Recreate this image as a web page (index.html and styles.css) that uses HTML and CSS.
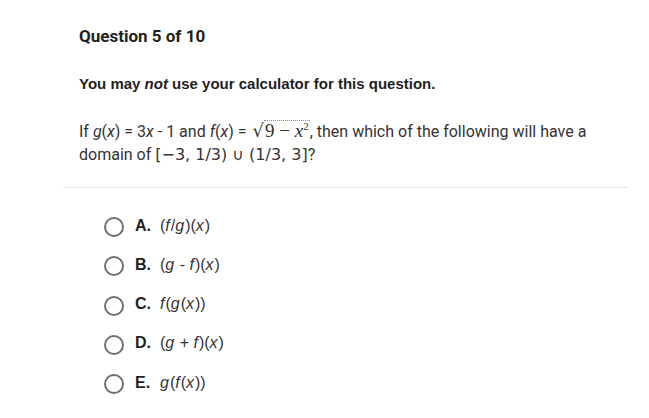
FILE: index.html
```html
<!DOCTYPE html>
<html>
<head>
<meta charset="utf-8">
<link rel="stylesheet" href="styles.css">
</head>
<body>
<div class="page">
  <h1 class="title">Question 5 of 10</h1>
  <p class="note">You may <em>not</em> use your calculator for this question.</p>
  <p class="stem">If <i>g</i>(<i>x</i>) = 3<i>x</i> - 1 and <i>f</i>(<i>x</i>) = <span class="sqrt"><span class="rad">√</span><span class="under">9 − <span class="serif-x">x</span><sup>2</sup></span></span>, then which of the following will have a domain of <span class="interval">[−3, 1/3) ∪ (1/3, 3]</span>?</p>
  <hr class="divider">
  <ul class="options">
    <li class="option"><span class="radio"></span><span class="letter">A.</span><span class="expr">(<i>f</i>/<i>g</i>)(<i>x</i>)</span></li>
    <li class="option"><span class="radio"></span><span class="letter">B.</span><span class="expr">(<i>g</i> - <i>f</i>)(<i>x</i>)</span></li>
    <li class="option"><span class="radio"></span><span class="letter">C.</span><span class="expr"><i>f</i>(<i>g</i>(<i>x</i>))</span></li>
    <li class="option"><span class="radio"></span><span class="letter">D.</span><span class="expr">(<i>g</i> + <i>f</i>)(<i>x</i>)</span></li>
    <li class="option"><span class="radio"></span><span class="letter">E.</span><span class="expr"><i>g</i>(<i>f</i>(<i>x</i>))</span></li>
  </ul>
</div>
</body>
</html>
```

FILE: styles.css
```css
html, body {
  margin: 0;
  padding: 0;
  background: #ffffff;
}
body {
  font-family: Roboto, "Liberation Sans", sans-serif;
  color: #333333;
}
.page {
  padding: 26px 21px 0 79px;
}
.title {
  margin: 0;
  font-size: 17px;
  font-weight: 700;
  color: #1f1f23;
  line-height: 20px;
}
.note {
  margin: 28px 0 0;
  font-family: "Liberation Sans", Arial, sans-serif;
  font-size: 15px;
  font-weight: 700;
  color: #1f1f23;
  line-height: 20px;
}
.note em {
  font-style: italic;
}
.stem {
  margin: 26px 0 0;
  font-size: 16px;
  line-height: 23px;
  color: #333333;
  max-width: 530px;
}
.stem i {
  font-style: italic;
}
.sqrt {
  display: inline-flex;
  align-items: flex-end;
  margin-left: 2px;
}
.rad {
  font-family: "DejaVu Serif", serif;
  font-size: 18px;
  line-height: 19px;
}
.under {
  border-top: 1px dotted #888;
  font-family: "Liberation Serif", serif;
  font-size: 19px;
  line-height: 19px;
  padding: 0 1px;
}
.serif-x {
  font-style: italic;
}
.under sup {
  font-size: 11px;
  line-height: 0;
}
.interval {
  font-family: "DejaVu Sans", sans-serif;
  font-size: 16px;
}
.divider {
  margin: 21px 0 0 -16px;
  border: 0;
  border-top: 1px solid #e2e2e2;
}
.options {
  list-style: none;
  margin: 18px 0 0;
  padding: 0 0 0 25px;
}
.option {
  display: flex;
  align-items: center;
  height: 39.25px;
  font-size: 15px;
}
.radio {
  width: 16px;
  height: 16px;
  border: 2px solid #6f6f6f;
  border-radius: 50%;
  box-sizing: content-box;
  flex: none;
  margin-top: 3px;
}
.letter {
  font-family: "Liberation Sans", Arial, sans-serif;
  font-size: 16px;
  font-weight: 700;
  color: #1f1f23;
  margin-left: 11px;
  width: 25px;
}
.expr {
  font-family: "Liberation Sans", Arial, sans-serif;
  font-size: 16px;
  color: #333333;
}
.expr i {
  font-style: italic;
  padding-right: 1px;
}
```
